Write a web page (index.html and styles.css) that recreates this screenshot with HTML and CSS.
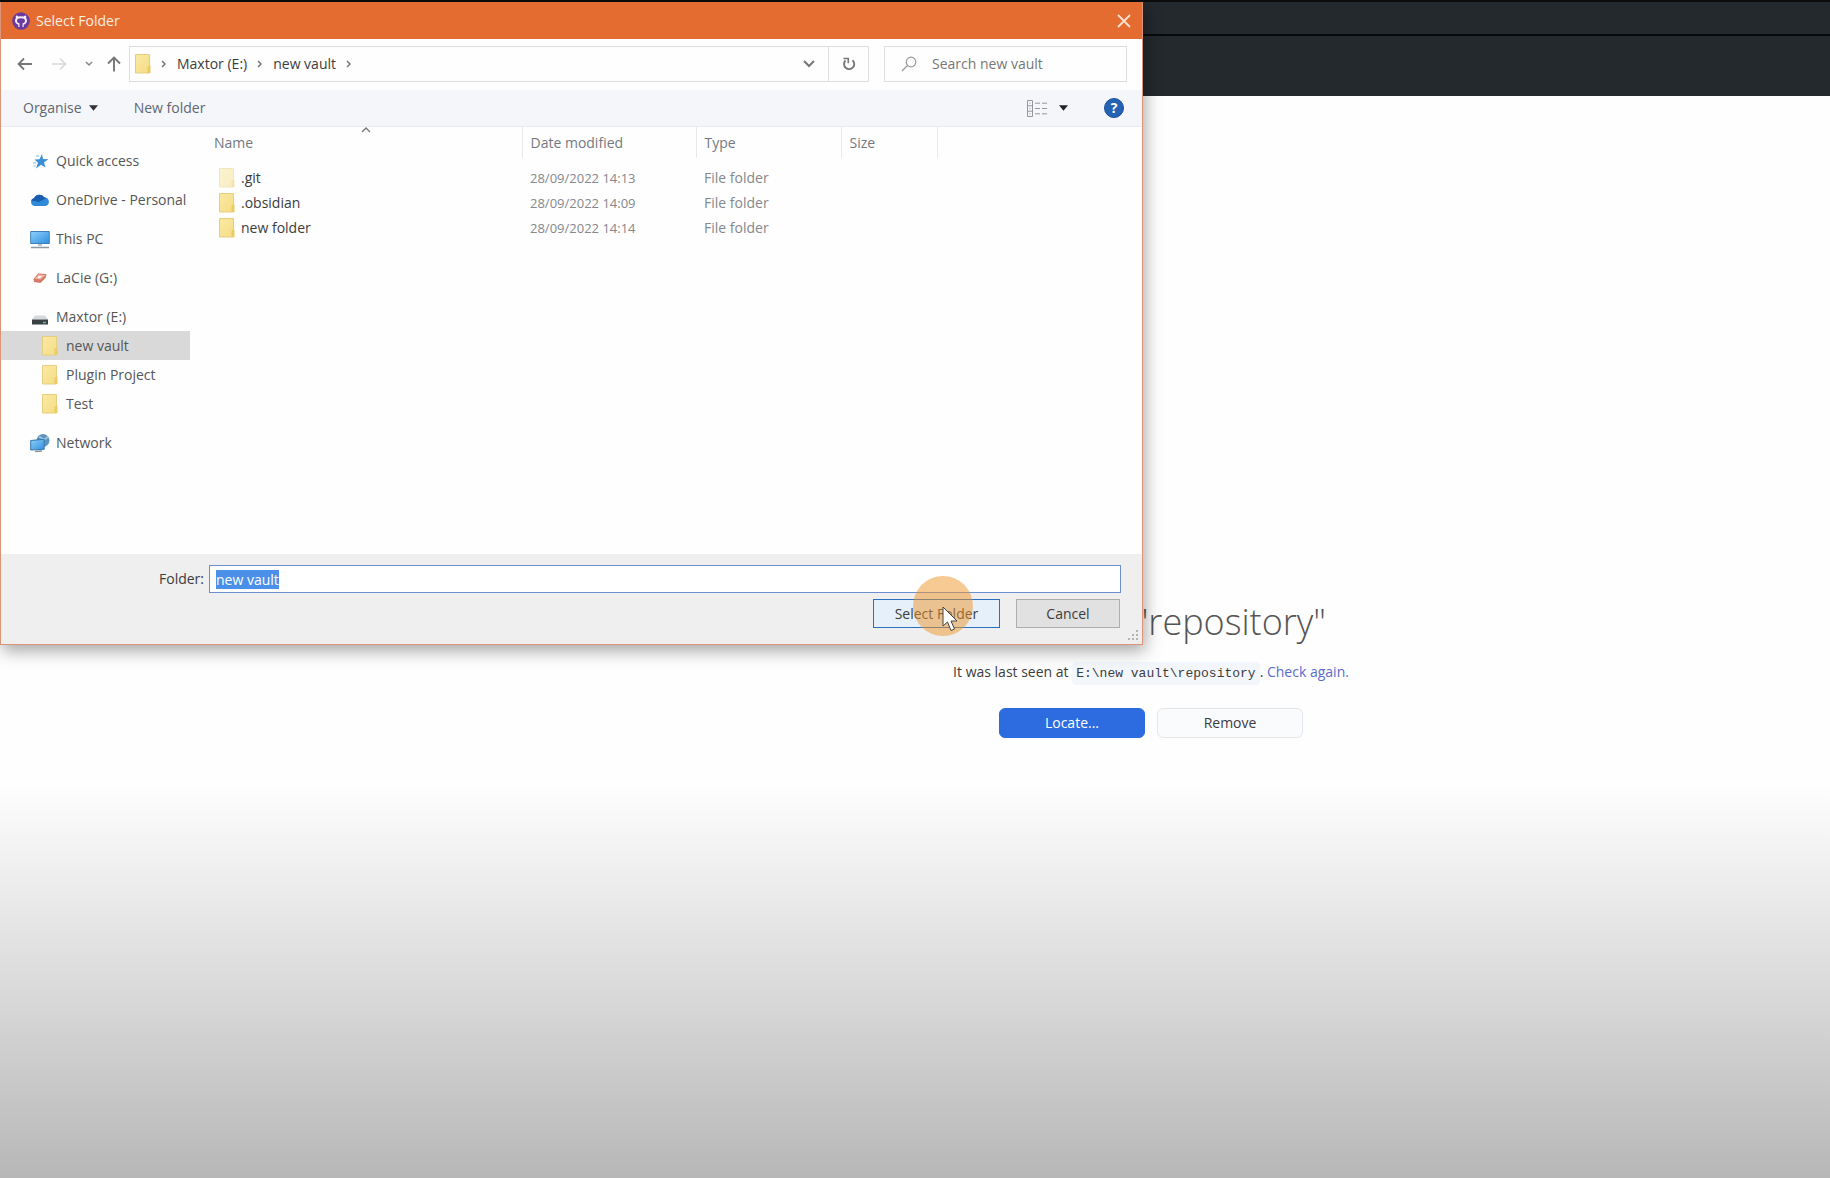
FILE: index.html
```html
<!DOCTYPE html>
<html lang="en">
<head>
<meta charset="utf-8">
<title>Select Folder</title>
<link rel="stylesheet" href="styles.css">
</head>
<body>
<svg class="defs" aria-hidden="true">
  <defs>
    <linearGradient id="gFolder" x1="0" y1="0" x2="1" y2="1"><stop offset="0" stop-color="#fbe9a4"/><stop offset="1" stop-color="#f5dd85"/></linearGradient>
    <linearGradient id="gScreen" x1="0" y1="0" x2="1" y2="1"><stop offset="0" stop-color="#8fd0fa"/><stop offset="1" stop-color="#2f8fe0"/></linearGradient>
    <symbol id="folder" viewBox="0 0 16 20"><path d="M.5.5h14v18.500H.5z" fill="url(#gFolder)" stroke="#e6ce80"/><path d="M12.500 12.500 15.500 11.500v7.500h-3z" fill="#eccb62"/></symbol>
    <symbol id="chev" viewBox="0 0 8 8"><path d="M2 1l3 3-3 3" fill="none" stroke="#777" stroke-width="1.500"/></symbol>
  </defs>
</svg>

<div class="app">
  <div class="app-menu"></div>
  <div class="app-toolbar"></div>
  <main class="missing">
    <h1 class="missing-title">"repository"</h1>
    <p class="missing-text">It was last seen at <code>E:\new vault\repository</code>. <a href="#">Check again.</a></p>
    <div class="missing-actions">
      <button class="btn btn-primary" type="button">Locate...</button>
      <button class="btn" type="button">Remove</button>
    </div>
  </main>
</div>

<section class="dialog" role="dialog" aria-labelledby="dialog-title">
  <header class="titlebar">
    <svg class="logo" viewBox="0 0 18 18" aria-hidden="true"><circle cx="9" cy="9" r="8.800" fill="#6a3a9c"/><path d="M6.300 15v-2.200C4.100 12 3 10.600 3 8.600c0-1.100.3-1.900.9-2.600-.2-.8-.2-1.600.1-2.500 1 0 1.800.5 2.500 1a9 9 0 0 1 5 0c.7-.5 1.500-1 2.500-1 .3.900.3 1.700.1 2.500.6.700.9 1.500.9 2.600 0 2-1.100 3.400-3.300 4.200V15z" fill="#f4edfa"/><path d="M9 6.200c-2.700 0-4 .7-4 2.600 0 1.500.9 2.200 2.500 2.500v4.200h3v-4.200c1.600-.3 2.500-1 2.500-2.500 0-1.900-1.300-2.600-4-2.600z" fill="#6a3a9c"/></svg>
    <h2 id="dialog-title">Select Folder</h2>
    <button class="icon-btn close" type="button" aria-label="Close"><svg width="14" height="14" viewBox="0 0 14 14"><path d="M1 1l12 12M13 1L1 13" stroke="#fbe3d0" stroke-width="1.800"/></svg></button>
  </header>

  <nav class="navbar">
    <div class="history">
      <button class="icon-btn" type="button" aria-label="Back"><svg width="16" height="14" viewBox="0 0 16 14"><path d="M15 7H1.500M7 1.500L1.500 7 7 12.500" fill="none" stroke="#777" stroke-width="1.800"/></svg></button>
      <button class="icon-btn" type="button" aria-label="Forward"><svg width="16" height="14" viewBox="0 0 16 14"><path d="M1 7h13M9 1.500L14.500 7 9 12.500" fill="none" stroke="#d9d9d9" stroke-width="1.600"/></svg></button>
      <button class="icon-btn" type="button" aria-label="Recent locations"><svg width="8" height="6" viewBox="0 0 8 6"><path d="M1 1l3 3 3-3" fill="none" stroke="#888" stroke-width="1.500"/></svg></button>
      <button class="icon-btn" type="button" aria-label="Up"><svg width="14" height="16" viewBox="0 0 14 16"><path d="M7 15.500V2M1 7.500l6-6 6 6" fill="none" stroke="#777" stroke-width="1.900"/></svg></button>
    </div>
    <div class="address">
      <svg class="folder" aria-hidden="true"><use href="#folder"/></svg>
      <svg class="chev" aria-hidden="true"><use href="#chev"/></svg>
      <button class="crumb" type="button">Maxtor (E:)</button>
      <svg class="chev" aria-hidden="true"><use href="#chev"/></svg>
      <button class="crumb" type="button">new vault</button>
      <svg class="chev" aria-hidden="true"><use href="#chev"/></svg>
      <button class="icon-btn previous" type="button" aria-label="Previous locations"><svg width="12" height="8" viewBox="0 0 12 8"><path d="M1 1l5 5 5-5" fill="none" stroke="#777" stroke-width="2"/></svg></button>
      <button class="icon-btn refresh" type="button" aria-label="Refresh"><svg width="14" height="14" viewBox="0 0 14 14"><path d="M10.500 3.200A5.100 5.100 0 1 1 3.500 3.500" fill="none" stroke="#777" stroke-width="1.900"/><path d="M1.500 1.500h4.800v4.800" fill="none" stroke="#777" stroke-width="1.600"/></svg></button>
    </div>
    <label class="search">
      <svg width="16" height="16" viewBox="0 0 16 16" aria-hidden="true"><circle cx="10" cy="6" r="4.800" fill="none" stroke="#999" stroke-width="1.200"/><path d="M6.500 9.500L1 15" stroke="#999" stroke-width="1.300"/></svg>
      <input type="search" placeholder="Search new vault" aria-label="Search new vault">
    </label>
  </nav>

  <div class="toolbar">
    <button class="tool" type="button">Organise <svg width="9" height="6" viewBox="0 0 10 6"><path d="M0 0h10L5 6z" fill="#333"/></svg></button>
    <button class="tool" type="button">New folder</button>
    <button class="tool view" type="button" aria-label="Change your view"><svg width="20" height="17" viewBox="0 0 20 17"><path d="M.5.5h5v16h-5zM.5 5.800h5M.5 11.200h5M2.500 3.200h1M2.500 8.500h1M2.500 13.800h1M8 3.200h5M15 3.200h5M8 8.500h5M15 8.500h5M8 13.800h5M15 13.800h5" fill="none" stroke="#93979c"/></svg><svg width="9" height="6" viewBox="0 0 10 6"><path d="M0 0h10L5 6z" fill="#222"/></svg></button>
    <button class="help" type="button" aria-label="Help">?</button>
  </div>

  <div class="body">
    <ul class="tree">
      <li><a href="#"><svg class="ico" viewBox="0 0 20 20"><path d="M12 3l1 5 5.500.3-4.500 3 1.500 5.200-4.500-2.800-5 3.800 2-5.700L4.500 8.500l5-.3z" fill="#3b8fd6"/><path d="M3 12h3M3.500 15h2M6 5h3" stroke="#7fb5e2"/></svg>Quick access</a></li>
      <li><a href="#"><svg class="ico" viewBox="0 0 20 20"><path d="M4.500 16A4 4 0 0 1 4 8.200 6 6 0 0 1 14.500 7.500 4.300 4.300 0 0 1 15.500 16z" fill="#2f8bd8"/><path d="M1 10.500A4 4 0 0 1 4 8.200 6 6 0 0 1 14.500 7.500l2 .6L9 12z" fill="#1b5cae"/></svg>OneDrive - Personal</a></li>
      <li><a href="#"><svg class="ico" viewBox="0 0 20 20"><path d="M.7 2.500h18.600v12H.7z" fill="url(#gScreen)" stroke="#3f7fb8"/><path d="M8 15h4v2H8z" fill="#b9c4cc"/><path d="M1 18.500h18" stroke="#8b98a3" stroke-width="1.500"/></svg>This PC</a></li>
      <li><a href="#"><svg class="ico" viewBox="0 0 20 20"><path d="M8 5.500l8.500.5-1 4-5 5-6.500-1-.5-3z" fill="#d27a68"/><path d="M8.500 6.500l7 .5-5 4.500-6-.8z" fill="#f0b3a4"/><path d="M9 8l3 .3-2 1.700-2.500-.3z" fill="#fff"/></svg>LaCie (G:)</a></li>
      <li><a href="#"><svg class="ico" viewBox="0 0 20 20"><path d="M5 8.500h10l3 4H2z" fill="#d6d8da"/><path d="M2 12.500h16v5H2z" fill="#3b4045"/><path d="M13 15.500h3" stroke="#58c28b" stroke-width="1.500"/></svg>Maxtor (E:)</a>
        <ul>
          <li><a href="#" class="current" aria-current="true"><svg class="folder"><use href="#folder"/></svg>new vault</a></li>
          <li><a href="#"><svg class="folder"><use href="#folder"/></svg>Plugin Project</a></li>
          <li><a href="#"><svg class="folder"><use href="#folder"/></svg>Test</a></li>
        </ul>
      </li>
      <li><a href="#"><svg class="ico" viewBox="0 0 20 20"><circle cx="13" cy="7.500" r="6.500" fill="#5d95bd"/><path d="M9 4c3 0 3 3 6 2s2-3 3-1" stroke="#a8cbe2" fill="none" stroke-width="1.500"/><path d="M.7 7.500l13.500-1.200v10L.7 17z" fill="url(#gScreen)" stroke="#3577ad"/><path d="M5 18.500l7-.5" stroke="#7f929f" stroke-width="1.500"/></svg>Network</a></li>
    </ul>

    <div class="files">
      <table>
        <colgroup><col class="c-name"><col class="c-date"><col class="c-type"><col class="c-size"></colgroup>
        <thead>
          <tr><th scope="col" aria-sort="ascending">Name<svg class="sort" width="10" height="6" viewBox="0 0 10 6"><path d="M1 5l4-4 4 4" fill="none" stroke="#777" stroke-width="1.300"/></svg></th><th scope="col">Date modified</th><th scope="col">Type</th><th scope="col">Size</th></tr>
        </thead>
        <tbody>
          <tr><td><span class="file hidden-file"><svg class="folder"><use href="#folder"/></svg>.git</span></td><td class="date">28/09/2022 14:13</td><td>File folder</td><td></td></tr>
          <tr><td><span class="file"><svg class="folder"><use href="#folder"/></svg>.obsidian</span></td><td class="date">28/09/2022 14:09</td><td>File folder</td><td></td></tr>
          <tr><td><span class="file"><svg class="folder"><use href="#folder"/></svg>new folder</span></td><td class="date">28/09/2022 14:14</td><td>File folder</td><td></td></tr>
        </tbody>
      </table>
    </div>
  </div>

  <form class="footer">
    <div class="field">
      <label for="folder-name">Folder:</label>
      <input id="folder-name" type="text" value="new vault" autofocus>
    </div>
    <div class="actions">
      <button class="win-btn default" type="button">Select Folder</button>
      <button class="win-btn" type="button">Cancel</button>
    </div>
    <svg class="grip" width="12" height="12" viewBox="0 0 12 12" aria-hidden="true"><path d="M9 0h2v2H9zM9 4h2v2H9zM9 8h2v2H9zM5 4h2v2H5zM5 8h2v2H5zM1 8h2v2H1z" fill="#b4b4b4"/></svg>
  </form>

  <div class="pointer" aria-hidden="true">
    <svg width="16" height="26" viewBox="0 0 16 26"><path d="M1 1v19l4.500-4 3.500 8.500 3.500-1.500-3.500-8h6z" fill="#fff" stroke="#444"/></svg>
  </div>
</section>
<script src="script.js"></script>
</body>
</html>
```
FILE: styles.css
```css
* { box-sizing: border-box; }

body {
  margin: 0;
  font: 14px/20px "Open Sans", "Noto Sans", sans-serif;
  color: #3c3c3c;
  background: #fefefe;
}

button, input { font: inherit; color: inherit; }
button { padding: 0; border: 0; background: none; }
a { color: inherit; text-decoration: none; }
ul { list-style: none; margin: 0; padding: 0; }
svg { display: block; flex: none; }
.defs { position: absolute; width: 0; height: 0; }

/* Application behind the dialog */
.app {
  min-height: 100vh;
  border-top: 2px solid #0c0c0d;
  background: linear-gradient(to top, #b7b7b7, #d5d5d5 164px, #e6e6e6 258px, #fefefe 394px);
}
.app-menu { height: 34px; background: #24292e; border-bottom: 2px solid #08090a; }
.app-toolbar { height: 60px; background: #24292e; }

.missing {
  display: flex;
  flex-direction: column;
  align-items: center;
  margin-left: 472px;
  padding-top: 502px;
}
.missing-title {
  width: 350px;
  margin: 0;
  font-size: 36px;
  font-weight: 300;
  line-height: 48px;
  text-align: right;
  color: #555;
}
.missing-text { margin: 16px 0 24px; }
.missing-text code {
  padding: 4px;
  border-radius: 4px;
  background: #f3f7fc;
  font: 13px/20px "Liberation Mono", monospace;
}
.missing-text a { color: #5a6ccb; }
.missing-actions { display: flex; gap: 12px; }
.btn {
  width: 146px;
  height: 30px;
  border: 1px solid #e4e6ea;
  border-radius: 6px;
  background: #fafbfc;
}
.btn-primary { border-color: #2c6be0; background: #2c6be0; color: #fff; }

/* Dialog window */
.dialog {
  position: absolute;
  top: 2px;
  left: 0;
  width: 1143px;
  border: 1px solid #dd9478;
  border-top: 0;
  background: #fefefe;
  box-shadow: 2px 6px 16px rgba(0, 0, 0, .35);
}

.titlebar {
  display: flex;
  align-items: center;
  height: 37px;
  padding: 0 11px;
  gap: 6px;
  background: #e46c30;
  color: #fdeee2;
}
.titlebar h2 { margin: 0; font-size: 14px; font-weight: 400; }
.logo { width: 18px; height: 18px; }
.icon-btn { display: flex; align-items: center; justify-content: center; }
.close { margin-left: auto; }

.navbar { display: flex; align-items: center; height: 51px; padding: 0 15px 2px 16px; }
.history { display: flex; align-items: center; gap: 18px; width: 112px; }
.history .icon-btn:last-child { margin-left: -4px; }
.address {
  display: flex;
  align-items: center;
  flex: 1;
  height: 36px;
  padding-left: 5px;
  border: 1px solid #dedede;
}
.folder { width: 16px; height: 20px; }
.chev { width: 8px; height: 8px; margin: 0 9px; }
.previous { width: 38px; height: 34px; margin-left: auto; }
.refresh { width: 40px; height: 34px; border-left: 1px solid #dedede; }
.search {
  display: flex;
  align-items: center;
  gap: 15px;
  width: 243px;
  height: 36px;
  margin-left: 15px;
  padding-left: 16px;
  border: 1px solid #dedede;
}
.search input { width: 160px; padding: 0; border: 0; outline: 0; background: none; }
.search input::placeholder { color: #777; opacity: 1; }

.toolbar {
  display: flex;
  align-items: center;
  height: 37px;
  padding: 0 18px 0 22px;
  gap: 36px;
  border-bottom: 1px solid #e8eaed;
  background: #f4f6f9;
  color: #5e6774;
}
.tool { display: flex; align-items: center; gap: 7px; }
.view { gap: 12px; margin-left: auto; }
.help {
  width: 20px;
  height: 20px;
  border: 1px solid #1c4f94;
  border-radius: 50%;
  background: #2463b4;
  color: #fff;
  font-weight: 700;
  line-height: 18px;
}

.body { display: flex; min-height: 427px; }
.tree { width: 189px; padding-top: 19px; color: #565656; }
.tree > li { margin-bottom: 10px; }
.tree a { display: flex; align-items: center; height: 29px; padding-left: 29px; gap: 6px; white-space: nowrap; }
.tree ul a { padding-left: 41px; gap: 8px; }
.tree .current { background: #d9d9d9; }
.ico { width: 20px; height: 20px; }

.files { flex: 1; padding-left: 16px; }
table { width: 731px; table-layout: fixed; border-collapse: collapse; color: #85888c; }
.c-name { width: 316px; }
.c-date { width: 174px; }
.c-type { width: 145px; }
.c-size { width: 96px; }
th {
  position: relative;
  height: 31px;
  padding: 0 8px;
  border-right: 1px solid #e6e8ea;
  font-weight: 400;
  text-align: left;
  color: #747980;
}
td { height: 25px; padding: 0 8px; }
.date { font-size: 13px; }
tbody::before { content: ""; display: block; height: 7px; }
.sort { position: absolute; top: 0; left: 49%; }
.file { display: flex; align-items: center; gap: 6px; padding-left: 5px; color: #3c3c3c; }
.hidden-file .folder { opacity: .5; }

.footer { position: relative; height: 90px; padding: 11px 21px 0 158px; background: #efefef; }
.field { display: flex; align-items: center; gap: 5px; }
.field input {
  flex: 1;
  height: 28px;
  padding: 0 6px;
  border: 1px solid #6b8fcf;
  outline: 0;
  background: #fff;
}
.field input::selection { background: #4a90e8; color: #fff; }
.actions { display: flex; justify-content: flex-end; gap: 16px; margin-top: 6px; padding-right: 1px; }
.win-btn { width: 104px; height: 29px; border: 1px solid #adadad; background: #e1e1e1; }
.win-btn.default { width: 127px; border-color: #2a6fc0; background: #e5f0fa; }
.grip { position: absolute; right: 3px; bottom: 2px; }

/* Click highlight with the mouse arrow */
.pointer {
  position: absolute;
  top: 574px;
  left: 912px;
  width: 60px;
  height: 60px;
  padding: 30px 0 0 29px;
  border-radius: 50%;
  background: rgba(240, 148, 40, .5);
  pointer-events: none;
}
```
FILE: script.js
```js
document.getElementById("folder-name").select();
```
